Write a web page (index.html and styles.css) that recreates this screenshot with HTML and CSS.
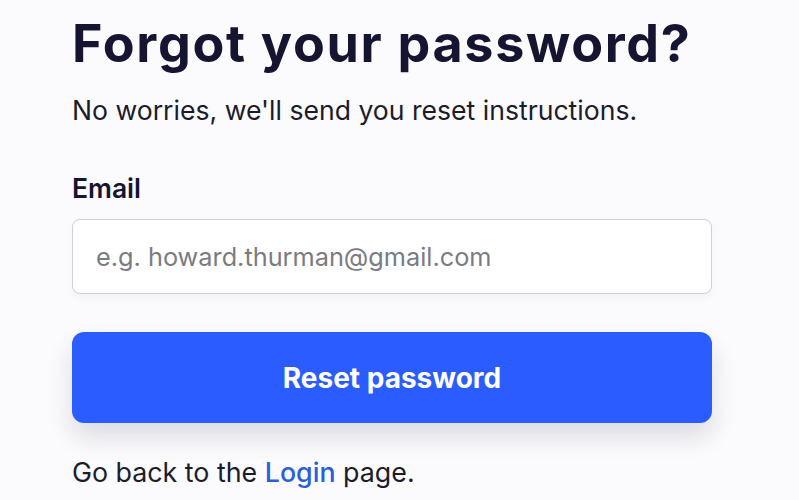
FILE: index.html
```html
<!DOCTYPE html>
<html>
<head>
<meta charset="utf-8">
<link rel="stylesheet" href="styles.css">
</head>
<body>
<main class="card">
  <h1 class="title">Forgot your password?</h1>
  <p class="subtitle">No worries, we'll send you reset instructions.</p>
  <form class="form">
    <label class="label" for="email">Email</label>
    <input class="input" id="email" type="email" placeholder="e.g. howard.thurman@gmail.com">
    <button class="button" type="button">Reset password</button>
  </form>
  <p class="back">Go back to the <a class="link" href="#">Login</a> page.</p>
</main>
</body>
</html>
```
FILE: styles.css
```css
html, body {
  margin: 0;
  background: #fbfbfd;
  font-family: Inter, "Noto Sans", sans-serif;
  color: #151531;
}
.card {
  width: 640px;
  padding: 12px 0 0 72px;
  display: flex;
  flex-direction: column;
}
.title {
  margin: 0;
  font-size: 52px;
  font-weight: 700;
  letter-spacing: 1.7px;
  line-height: 64px;
  color: #151531;
}
.subtitle {
  margin: 18px 0 0;
  font-size: 26.6px;
  line-height: 32px;
  color: #1b1b2b;
}
.form {
  display: flex;
  flex-direction: column;
  margin-top: 46px;
}
.label {
  font-size: 26.5px;
  font-weight: 600;
  line-height: 32px;
  color: #151531;
}
.input {
  margin-top: 15px;
  height: 75px;
  box-sizing: border-box;
  border: 1px solid #cfd0d6;
  border-radius: 8px;
  background: #fff;
  padding: 0 23px;
  font-family: inherit;
  font-size: 25.3px;
  color: #151531;
  box-shadow: 0 4px 10px rgba(20, 20, 60, 0.04);
}
.input::placeholder {
  color: #7b7b84;
}
.button {
  margin-top: 38px;
  height: 91px;
  border: none;
  border-radius: 12px;
  background: #2b5cff;
  color: #fff;
  font-family: inherit;
  font-size: 28px;
  font-weight: 700;
  box-shadow: 0 14px 24px rgba(30, 30, 70, 0.14);
}
.back {
  margin: 33px 0 0;
  font-size: 26.8px;
  line-height: 32px;
  color: #1b1b2b;
}
.link {
  color: #2b5fd9;
  text-decoration: none;
  font-weight: 500;
}
```
